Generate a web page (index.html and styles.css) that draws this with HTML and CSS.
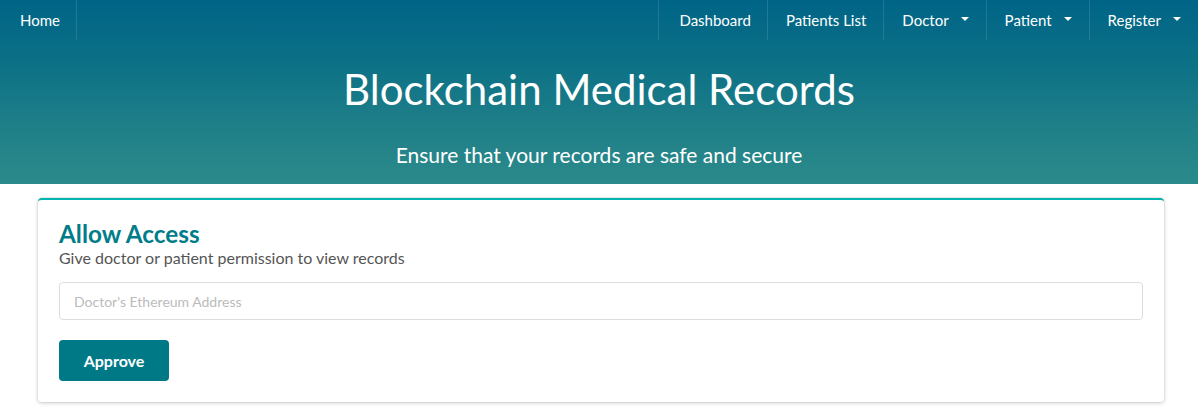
FILE: index.html
```html
<!DOCTYPE html>
<html>
<head>
<meta charset="utf-8">
<link rel="stylesheet" href="styles.css">
</head>
<body>
<header class="hero">
  <nav class="nav">
    <a class="nav-item sep-right">Home</a>
    <div class="nav-right">
      <a class="nav-item sep-left">Dashboard</a>
      <a class="nav-item sep-left">Patients List</a>
      <a class="nav-item sep-left">Doctor <span class="caret"></span></a>
      <a class="nav-item sep-left">Patient <span class="caret"></span></a>
      <a class="nav-item sep-left">Register <span class="caret"></span></a>
    </div>
  </nav>
  <h1 class="title">Blockchain Medical Records</h1>
  <p class="subtitle">Ensure that your records are safe and secure</p>
</header>
<main class="content">
  <section class="card">
    <h2 class="card-title">Allow Access</h2>
    <p class="card-desc">Give doctor or patient permission to view records</p>
    <input class="field" type="text" placeholder="Doctor's Ethereum Address">
    <button class="btn">Approve</button>
  </section>
</main>
</body>
</html>
```

FILE: styles.css
```css
* { box-sizing: border-box; }
html, body { margin: 0; padding: 0; }
body {
  font-family: Lato, "Open Sans", sans-serif;
  background: #fff;
  width: 1198px;
  height: 415px;
  overflow: hidden;
}
.hero {
  height: 184px;
  background: linear-gradient(to bottom, #006487 0%, #0a6f86 30%, #1d7e88 65%, #2b8a8a 100%);
  color: #fff;
  display: flex;
  flex-direction: column;
}
.nav {
  height: 40px;
  display: flex;
  justify-content: space-between;
  align-items: stretch;
}
.nav-right { display: flex; }
.nav-item {
  display: flex;
  align-items: center;
  padding: 0 17px 1px 18px;
  font-size: 15px;
  color: #fff;
  white-space: nowrap;
}
.nav-item:first-child { padding-left: 20px; padding-right: 16px; }
.sep-right { border-right: 1px solid rgba(255,255,255,0.12); }
.sep-left { border-left: 1px solid rgba(255,255,255,0.12); }
.caret {
  display: inline-block;
  width: 0; height: 0;
  border-left: 4px solid transparent;
  border-right: 4px solid transparent;
  border-top: 4px solid #fff;
  margin-left: 12px;
  margin-top: -2px;
}
.title {
  margin: 21px 0 0;
  text-align: center;
  font-weight: 400;
  font-size: 42px;
  line-height: 56px;
}
.subtitle {
  margin: 25px 0 0;
  text-align: center;
  font-size: 21px;
  line-height: 26px;
}
.content { padding: 14px 34px 0 38px; }
.card {
  width: 1126px;
  border-top: 2px solid #00b5ad;
  border-radius: 4px;
  background: #fff;
  box-shadow: 0 1px 4px rgba(0,0,0,0.2), 0 0 0 1px rgba(0,0,0,0.04);
  padding: 20px 21px 21px 21px;
  display: flex;
  flex-direction: column;
  align-items: flex-start;
}
.card-title {
  margin: 0;
  font-size: 24.3px;
  line-height: 28px;
  font-weight: 700;
  color: #007d89;
}
.card-desc {
  margin: 0;
  font-size: 16px;
  line-height: 20px;
  color: #555;
}
.field {
  margin-top: 14px;
  width: 100%;
  height: 38px;
  border: 1px solid #ddd;
  border-radius: 4px;
  padding: 0 14px;
  font-family: Lato, sans-serif;
  font-size: 14px;
  outline: none;
}
.field::placeholder { color: #bbb; }
.btn {
  margin-top: 20px;
  width: 110px;
  height: 41px;
  border: none;
  border-radius: 4px;
  background: #007987;
  color: #fff;
  font-family: Lato, sans-serif;
  font-weight: 700;
  font-size: 16px;
}
```
